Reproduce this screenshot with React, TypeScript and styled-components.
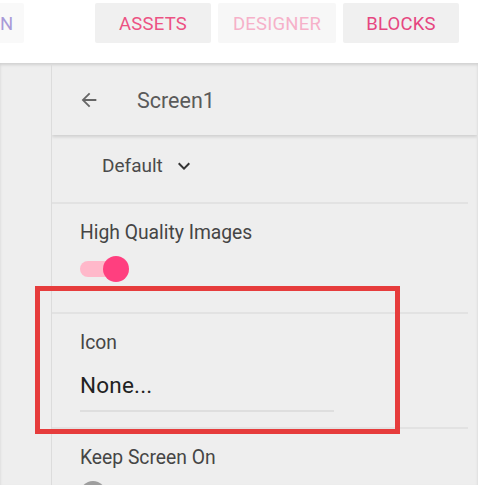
import React from 'react';
import styled, { createGlobalStyle } from 'styled-components';

const GlobalStyle = createGlobalStyle`
  body {
    margin: 0;
    background: #ffffff;
    font-family: Roboto, "Liberation Sans", sans-serif;
    overflow: hidden;
  }
`;

const Page = styled.div`
  position: relative;
  width: 478px;
  height: 485px;
  overflow: hidden;
  background: #ffffff;
`;

const TopBar = styled.div`
  height: 63px;
  display: flex;
  align-items: flex-start;
  padding-top: 3px;
  box-sizing: border-box;
  background: #ffffff;
`;

const TabButton = styled.div<{ $bg: string; $color: string; $width: number }>`
  width: ${(p) => p.$width}px;
  height: 40px;
  display: flex;
  align-items: center;
  justify-content: center;
  padding-top: 1px;
  box-sizing: border-box;
  background: ${(p) => p.$bg};
  color: ${(p) => p.$color};
  font-size: 18.5px;
  letter-spacing: 0.2px;
  border-radius: 2px;
  margin-right: 7px;
`;

const CutButton = styled(TabButton)`
  justify-content: flex-start;
  margin-right: 71px;
  border-radius: 0 2px 2px 0;
`;

const Body = styled.div`
  display: flex;
  height: 422px;
  background: #eeeeee;
  box-shadow: inset 0 2px 3px rgba(0, 0, 0, 0.12);
`;

const Strip = styled.div`
  width: 51px;
  border-right: 1px solid #dcdcdc;
  margin-top: 2px;
`;

const Panel = styled.div`
  flex: 1;
  display: flex;
  flex-direction: column;
  margin-right: 1px;
  margin-top: 2px;
  overflow: hidden;
`;

const Header = styled.div`
  flex-shrink: 0;
  height: 70px;
  display: flex;
  align-items: center;
  padding-left: 26px;
  gap: 37px;
  color: #5a5a5a;
  font-size: 21.5px;
  box-shadow: 0 2px 3px rgba(0, 0, 0, 0.13);
  position: relative;
  z-index: 1;
`;

const Section = styled.div`
  flex-shrink: 0;
  margin-right: 9px;
  border-bottom: 2px solid #e2e2e2;
  padding-left: 28px;
`;

const StyleRow = styled(Section)`
  height: 69px;
  box-sizing: border-box;
  display: flex;
  align-items: center;
  padding-left: 50px;
  padding-bottom: 6px;
  gap: 9px;
  font-size: 19px;
  color: #4a4a4a;
`;

const Property = styled(Section)<{ $h: number }>`
  height: ${(p) => p.$h}px;
  padding-top: 18px;
  box-sizing: border-box;
`;

const Label = styled.div`
  font-size: 19.3px;
  color: #454545;
  line-height: 22px;
`;

const Toggle = styled.div<{ $on: boolean }>`
  position: relative;
  width: 50px;
  height: 26px;
  margin-top: 12px;
  &::before {
    content: '';
    position: absolute;
    left: 0;
    top: 5px;
    width: 32px;
    height: 16px;
    border-radius: 8px;
    background: ${(p) => (p.$on ? '#ffb8ca' : '#bdbdbd')};
  }
  &::after {
    content: '';
    position: absolute;
    top: 0;
    left: ${(p) => (p.$on ? '23px' : '0px')};
    width: 26px;
    height: 26px;
    border-radius: 50%;
    background: ${(p) => (p.$on ? '#ff3f7f' : '#9e9e9e')};
  }
`;

const ValueField = styled.div`
  width: 254px;
  margin-top: 18px;
  padding-bottom: 12px;
  border-bottom: 2px solid #dedede;
  font-size: 22.5px;
  color: #222222;
  letter-spacing: 0.2px;
`;

const Highlight = styled.div`
  position: absolute;
  left: 35px;
  top: 286px;
  width: 365px;
  height: 148px;
  box-sizing: border-box;
  border: 5px solid #e63c3c;
  pointer-events: none;
`;

const BackArrow = () => (
  <svg width="22" height="22" viewBox="0 0 24 24" fill="#666">
    <path d="M20 11H7.83l5.59-5.59L12 4l-8 8 8 8 1.41-1.41L7.83 13H20v-2z" />
  </svg>
);

const Chevron = () => (
  <svg width="24" height="24" viewBox="0 0 24 24" fill="#333">
    <path d="M7.41 8.59L12 13.17l4.59-4.58L18 10l-6 6-6-6 1.41-1.41z" />
  </svg>
);

export default function App() {
  return (
    <Page>
      <GlobalStyle />
      <TopBar>
        <CutButton $bg="#f9f9f9" $color="#a89ad8" $width={24}>N</CutButton>
        <TabButton $bg="#f0f0f0" $color="#ec5283" $width={116}>ASSETS</TabButton>
        <TabButton $bg="#f7f7f7" $color="#f6b1c9" $width={118}>DESIGNER</TabButton>
        <TabButton $bg="#f0f0f0" $color="#e64680" $width={116}>BLOCKS</TabButton>
      </TopBar>
      <Body>
        <Strip />
        <Panel>
          <Header>
            <BackArrow />
            <span>Screen1</span>
          </Header>
          <StyleRow>
            <span>Default</span>
            <Chevron />
          </StyleRow>
          <Property $h={110}>
            <Label>High Quality Images</Label>
            <Toggle $on />
          </Property>
          <Property $h={115}>
            <Label>Icon</Label>
            <ValueField>None...</ValueField>
          </Property>
          <Property $h={80}>
            <Label>Keep Screen On</Label>
            <Toggle $on={false} />
          </Property>
        </Panel>
      </Body>
      <Highlight />
    </Page>
  );
}
